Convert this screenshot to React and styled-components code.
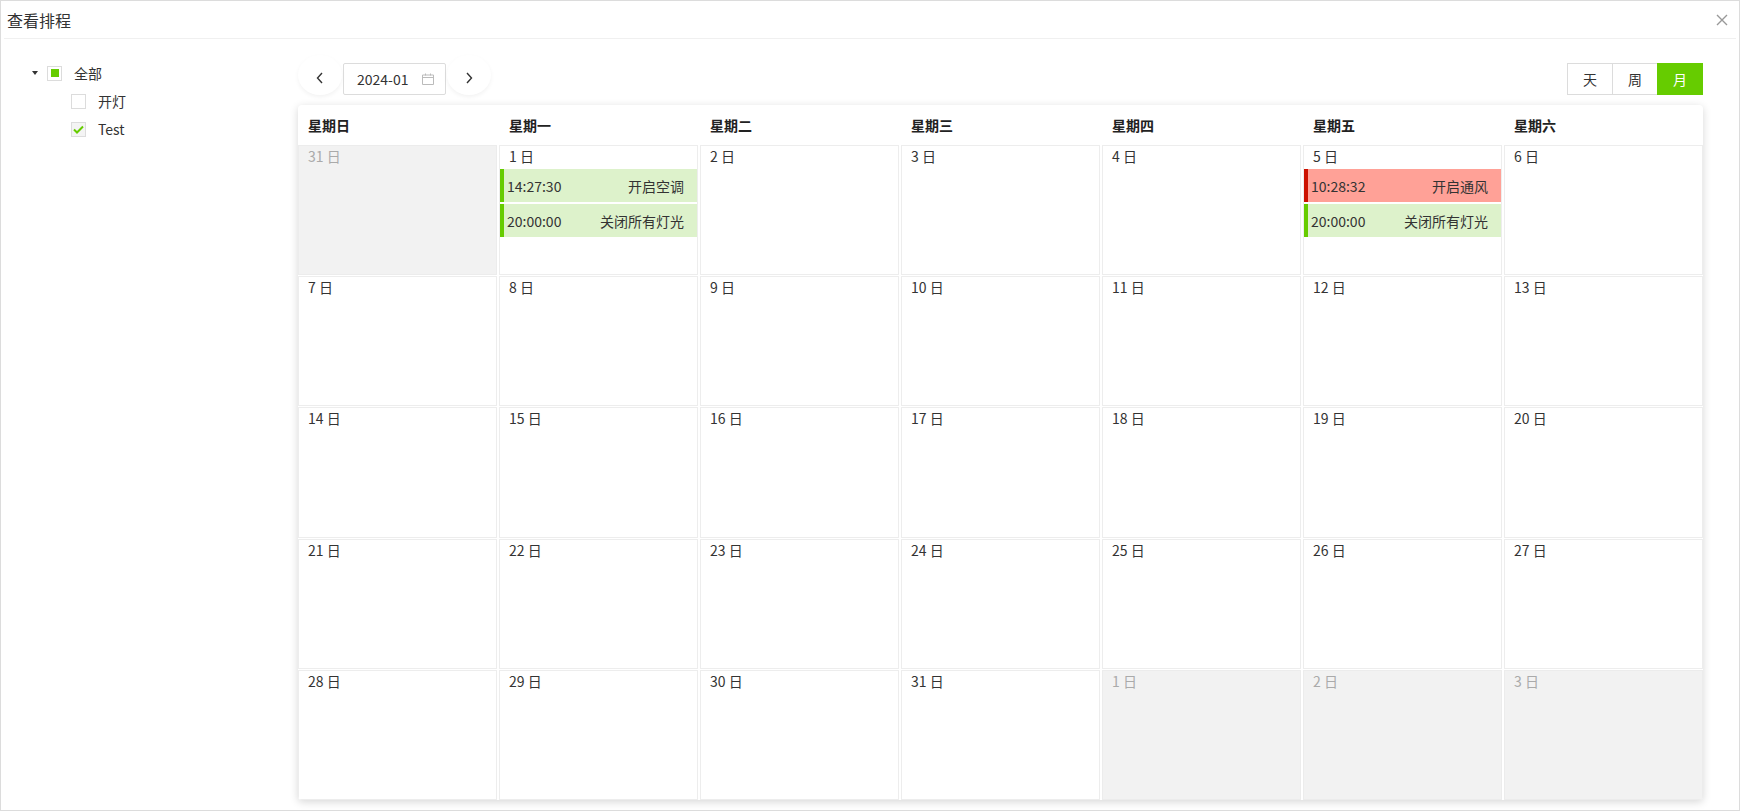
import styled, { createGlobalStyle } from "styled-components";

const GlobalStyle = createGlobalStyle`
  * {
    box-sizing: border-box;
  }
  html,
  body {
    margin: 0;
    padding: 0;
    height: 100%;
    background: #fff;
  }
  body {
    font-family: "Noto Sans CJK SC", "Noto Sans", sans-serif;
    color: #333;
    font-size: 14px;
  }
`;

const Modal = styled.div`
  height: 100vh;
  border: 1px solid #dcdcdc;
  display: flex;
  flex-direction: column;
`;
const Header = styled.div`
  height: 38px;
  margin: 0 3px;
  padding: 0 7px 0 3px;
  display: flex;
  align-items: center;
  justify-content: space-between;
  border-bottom: 1px solid #f0f0f0;
`;
const Title = styled.h3`
  margin: 0;
  font-size: 16px;
  font-weight: 400;
  color: #333;
`;
const CloseButton = styled.button`
  all: unset;
  width: 14px;
  height: 14px;
  display: flex;
  align-items: center;
  justify-content: center;
  cursor: pointer;
`;
const Body = styled.div`
  flex: 1;
  display: flex;
  padding: 16px 36px 10px 0;
  min-height: 0;
`;
const Sidebar = styled.ul`
  width: 297px;
  flex-shrink: 0;
  margin: 0;
  padding: 4px 0 0 30px;
  list-style: none;
`;
const TreeRow = styled.li`
  height: 28px;
  display: flex;
  align-items: center;
  padding-left: ${(p) => (p.$child ? 40 : 0)}px;
  font-size: 14px;
  color: #333;
`;
const Caret = styled.span`
  width: 16px;
  height: 28px;
  display: flex;
  align-items: center;
  &::before {
    content: "";
    margin-left: 1px;
    border-left: 3.5px solid transparent;
    border-right: 3.5px solid transparent;
    border-top: 4px solid #333;
  }
`;
const Check = styled.span`
  width: 15px;
  height: 15px;
  border: 1px solid #dcdcdc;
  background: ${(p) => (p.$checked ? "#f4f4f4" : "#fff")};
  display: flex;
  align-items: center;
  justify-content: center;
  &::after {
    content: "";
    display: ${(p) => (p.$half ? "block" : "none")};
    width: 8px;
    height: 8px;
    background: #66cc00;
  }
`;
const TreeLabel = styled.span`
  margin-left: 12px;
`;

const Main = styled.div`
  flex: 1;
  display: flex;
  flex-direction: column;
  min-width: 0;
`;
const Toolbar = styled.div`
  height: 40px;
  display: flex;
  align-items: flex-end;
  justify-content: space-between;
  margin-bottom: 10px;
`;
const Pager = styled.div`
  display: flex;
  align-items: flex-end;
  gap: 1px;
`;
const RoundButton = styled.button`
  all: unset;
  width: 44px;
  height: 40px;
  border-radius: 50%;
  background: #fff;
  box-shadow: 0 2px 4px rgba(0, 0, 0, 0.05);
  display: flex;
  align-items: center;
  justify-content: center;
  padding-top: 6px;
  box-sizing: border-box;
  cursor: pointer;
`;
const DateField = styled.div`
  width: 103px;
  height: 32px;
  border: 1px solid #dcdcdc;
  border-radius: 2px;
  display: flex;
  align-items: center;
  justify-content: space-between;
  padding: 0 11px 0 13px;
  font-size: 14px;
  color: #333;
`;
const ViewSwitch = styled.div`
  display: flex;
`;
const ViewButton = styled.button`
  all: unset;
  box-sizing: border-box;
  width: 46px;
  height: 32px;
  margin-left: -1px;
  border: 1px solid ${(p) => (p.$active ? "#66cc00" : "#dcdcdc")};
  background: ${(p) => (p.$active ? "#66cc00" : "#fff")};
  color: ${(p) => (p.$active ? "#fff" : "#333")};
  font-family: "Noto Sans CJK SC", "Noto Sans", sans-serif;
  font-size: 14px;
  text-align: center;
  line-height: 30px;
  position: relative;
  z-index: ${(p) => (p.$active ? 1 : 0)};
  cursor: pointer;
`;

const Card = styled.div`
  flex: 1;
  display: flex;
  flex-direction: column;
  background: #fff;
  border-radius: 4px;
  box-shadow: 0 2px 8px rgba(0, 0, 0, 0.16);
  overflow: hidden;
  min-height: 0;
`;
const WeekHeader = styled.div`
  height: 40px;
  display: grid;
  grid-template-columns: repeat(7, 1fr);
  column-gap: 2px;
`;
const WeekDay = styled.div`
  display: flex;
  align-items: center;
  padding-left: 10px;
  font-size: 14px;
  font-weight: 700;
  color: #222;
`;
const MonthGrid = styled.div`
  flex: 1;
  display: grid;
  grid-template-columns: repeat(7, 1fr);
  grid-template-rows: repeat(5, 1fr);
  column-gap: 2px;
  row-gap: 1px;
  min-height: 0;
`;
const DayCell = styled.div`
  border: 1px solid ${(p) => (p.$muted ? "#ececec" : "#ededed")};
  background: ${(p) => (p.$muted ? "#f2f2f2" : "#fff")};
  display: flex;
  flex-direction: column;
  gap: 2px;
  min-height: 0;
  overflow: hidden;
`;
const DayNumber = styled.div`
  height: 21px;
  line-height: 21px;
  padding-left: 9px;
  font-size: 14px;
  color: ${(p) => (p.$muted ? "#aaa" : "#333")};
`;
const tones = {
  green: { bg: "#ddf2cb", bar: "#66cc00" },
  red: { bg: "#ffa197", bar: "#cc1100" },
};
const EventBar = styled.div`
  height: 33px;
  flex-shrink: 0;
  display: flex;
  align-items: center;
  justify-content: space-between;
  padding: 0 13px 0 3px;
  border-left: 4px solid ${(p) => tones[p.$tone].bar};
  background: ${(p) => tones[p.$tone].bg};
  font-size: 14px;
  color: #333;
  white-space: nowrap;
`;

const weekDays = ["星期日", "星期一", "星期二", "星期三", "星期四", "星期五", "星期六"];

const events = {
  1: [
    { time: "14:27:30", title: "开启空调", tone: "green" },
    { time: "20:00:00", title: "关闭所有灯光", tone: "green" },
  ],
  5: [
    { time: "10:28:32", title: "开启通风", tone: "red" },
    { time: "20:00:00", title: "关闭所有灯光", tone: "green" },
  ],
};

const days = [
  { day: 31, muted: true },
  ...Array.from({ length: 31 }, (_, i) => ({ day: i + 1 })),
  { day: 1, muted: true },
  { day: 2, muted: true },
  { day: 3, muted: true },
];

const Chevron = ({ dir }) => (
  <svg width="10" height="14" viewBox="0 0 10 14">
    <path
      d={dir === "left" ? "M7 2 L2.5 7 L7 12" : "M3 2 L7.5 7 L3 12"}
      fill="none"
      stroke="#333"
      strokeWidth="1.4"
    />
  </svg>
);

export default function App() {
  return (
    <>
      <GlobalStyle />
      <Modal>
        <Header>
          <Title>查看排程</Title>
          <CloseButton>
            <svg width="12" height="12" viewBox="0 0 12 12">
              <path d="M1 1 L11 11 M11 1 L1 11" stroke="#999" strokeWidth="1.4" />
            </svg>
          </CloseButton>
        </Header>
        <Body>
          <Sidebar>
            <TreeRow>
              <Caret />
              <Check $half />
              <TreeLabel>全部</TreeLabel>
            </TreeRow>
            <TreeRow $child>
              <Check />
              <TreeLabel>开灯</TreeLabel>
            </TreeRow>
            <TreeRow $child>
              <Check $checked>
                <svg width="11" height="9" viewBox="0 0 11 9">
                  <path d="M1 4.5 L4 7.5 L10 1.5" fill="none" stroke="#66cc00" strokeWidth="2" />
                </svg>
              </Check>
              <TreeLabel>Test</TreeLabel>
            </TreeRow>
          </Sidebar>
          <Main>
            <Toolbar>
              <Pager>
                <RoundButton>
                  <Chevron dir="left" />
                </RoundButton>
                <DateField>
                  <span>2024-01</span>
                  <svg width="12" height="12" viewBox="0 0 12 12">
                    <path
                      d="M0.5 2 H11.5 V11.5 H0.5 Z M0.5 4.5 H11.5 M3.5 0.5 V2.5 M8.5 0.5 V2.5"
                      fill="none"
                      stroke="#bbb"
                      strokeWidth="1"
                    />
                  </svg>
                </DateField>
                <RoundButton>
                  <Chevron dir="right" />
                </RoundButton>
              </Pager>
              <ViewSwitch>
                <ViewButton>天</ViewButton>
                <ViewButton>周</ViewButton>
                <ViewButton $active>月</ViewButton>
              </ViewSwitch>
            </Toolbar>
            <Card>
              <WeekHeader>
                {weekDays.map((w) => (
                  <WeekDay key={w}>{w}</WeekDay>
                ))}
              </WeekHeader>
              <MonthGrid>
                {days.map((d, i) => (
                  <DayCell key={i} $muted={d.muted}>
                    <DayNumber $muted={d.muted}>{d.day} 日</DayNumber>
                    {!d.muted &&
                      (events[d.day] || []).map((e, j) => (
                        <EventBar key={j} $tone={e.tone}>
                          <span>{e.time}</span>
                          <span>{e.title}</span>
                        </EventBar>
                      ))}
                  </DayCell>
                ))}
              </MonthGrid>
            </Card>
          </Main>
        </Body>
      </Modal>
    </>
  );
}
